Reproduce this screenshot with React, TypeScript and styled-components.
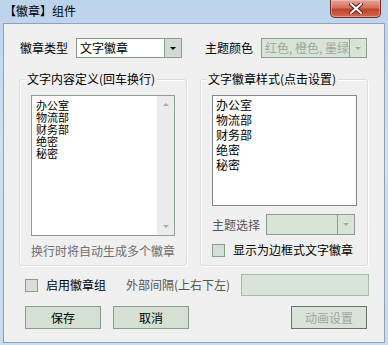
import React, { FC } from "react";
import styled, { createGlobalStyle } from "styled-components";

const GlobalStyle = createGlobalStyle`
	html, body {
		margin: 0;
		padding: 0;
		background: #c9dbef;
	}
	* {
		box-sizing: border-box;
	}
`;

const FONT = `"Noto Sans CJK SC", "Noto Sans", sans-serif`;

const textLines = ["办公室", "物流部", "财务部", "绝密", "秘密"];

const App: FC = () => {
	return (
		<>
			<GlobalStyle />
			<Window>
				<TitleBar>
					<Title>【徽章】组件</Title>
					<CloseButton>
						<svg width="14" height="11" viewBox="0 0 14 11">
							<path d="M2 1 L12 10 M12 1 L2 10" stroke="#5a2018" strokeWidth="4" strokeLinecap="square" />
							<path d="M2 1 L12 10 M12 1 L2 10" stroke="#ffffff" strokeWidth="2" strokeLinecap="square" />
						</svg>
					</CloseButton>
				</TitleBar>
				<Client>
					<TopRow>
						<FieldLabel $width={56}>徽章类型</FieldLabel>
						<Combo $width={106}>
							<ComboText>文字徽章</ComboText>
							<ComboArrow>
								<Triangle />
							</ComboArrow>
						</Combo>
						<Spacer $width={23} />
						<FieldLabel $width={56}>主题颜色</FieldLabel>
						<Combo $width={106} $disabled>
							<ComboText $disabled>红色, 橙色, 墨绿</ComboText>
							<ComboArrow $disabled>
								<Triangle $disabled />
							</ComboArrow>
						</Combo>
					</TopRow>

					<Groups>
						<Group>
							<Legend>文字内容定义(回车换行)</Legend>
							<TextArea>
								<TextLines>
									{textLines.map((t) => (
										<Line key={t} $tight>
											{t}
										</Line>
									))}
								</TextLines>
								<ScrollBar>
									<Triangle $disabled $up />
									<Triangle $disabled />
								</ScrollBar>
							</TextArea>
							<Hint>换行时将自动生成多个徽章</Hint>
						</Group>
						<Group>
							<Legend>文字徽章样式(点击设置)</Legend>
							<ListBox>
								{textLines.map((t) => (
									<Line key={t}>{t}</Line>
								))}
							</ListBox>
							<ThemeRow>
								<FieldLabel $width={54} $muted>
									主题选择
								</FieldLabel>
								<Combo $width={89} $height={21} $disabled>
									<ComboText $disabled />
									<ComboArrow $disabled>
										<Triangle $disabled />
									</ComboArrow>
								</Combo>
							</ThemeRow>
							<CheckRow>
								<CheckBox />
								<CheckLabel>显示为边框式文字徽章</CheckLabel>
							</CheckRow>
						</Group>
					</Groups>

					<OptionRow>
						<CheckBox />
						<CheckLabel>启用徽章组</CheckLabel>
						<Spacer $width={20} />
						<FieldLabel $width={115} $muted>
							外部间隔(上右下左)
						</FieldLabel>
						<SpacingInput />
					</OptionRow>

					<ButtonRow>
						<Button>保存</Button>
						<Button>取消</Button>
						<Spacer $grow />
						<Button $disabled>动画设置</Button>
					</ButtonRow>
				</Client>
			</Window>
		</>
	);
};

export default App;

const Window = styled.div`
	width: 388px;
	height: 345px;
	background: linear-gradient(#bcd3ec, #cfe0f2 40%, #c9dbef);
	display: flex;
	flex-direction: column;
	font-family: ${FONT};
	font-size: 12px;
	color: #000;
`;

const TitleBar = styled.div`
	height: 23px;
	display: flex;
	align-items: flex-start;
	justify-content: space-between;
	padding: 0 7px 0 4px;
`;

const Title = styled.div`
	line-height: 14px;
	margin-top: 4px;
	font-size: 12px;
`;

const CloseButton = styled.div`
	width: 51px;
	height: 18px;
	border: 1px solid #6b2a22;
	border-top: none;
	border-radius: 0 0 5px 5px;
	background: linear-gradient(#e4a597, #d2715f 45%, #c0432b 55%, #d36a4f);
	display: flex;
	align-items: center;
	justify-content: center;
	box-shadow: inset 0 0 0 1px rgba(255, 210, 200, 0.45);
`;

const Client = styled.div`
	flex: 1;
	margin: 0 3px 2px 3px;
	border: 1px solid #8fa2b8;
	background: #f0f0f0;
	display: flex;
	flex-direction: column;
	padding: 0 0 0 15px;
`;

const TopRow = styled.div`
	display: flex;
	align-items: center;
	margin-top: 14px;
	padding-left: 1px;
	height: 20px;
`;

const FieldLabel = styled.div<{ $width: number; $muted?: boolean }>`
	width: ${(p) => p.$width}px;
	flex-shrink: 0;
	white-space: nowrap;
	line-height: 14px;
	color: ${(p) => (p.$muted ? "#555" : "#000")};
`;

const Spacer = styled.div<{ $width?: number; $grow?: boolean }>`
	width: ${(p) => p.$width ?? 0}px;
	flex: ${(p) => (p.$grow ? 1 : "none")};
`;

const Combo = styled.div<{ $width: number; $height?: number; $disabled?: boolean }>`
	width: ${(p) => p.$width}px;
	height: ${(p) => p.$height ?? 20}px;
	border: 1px solid #8a9c8a;
	display: flex;
	background: ${(p) => (p.$disabled ? "#d8e4d8" : "#fff")};
`;

const ComboText = styled.div<{ $disabled?: boolean }>`
	flex: 1;
	padding-left: 3px;
	line-height: 18px;
	white-space: nowrap;
	overflow: hidden;
	color: ${(p) => (p.$disabled ? "#a3a3a3" : "#000")};
`;

const ComboArrow = styled.div<{ $disabled?: boolean }>`
	width: 17px;
	border-left: 1px solid #8a9c8a;
	background: ${(p) => (p.$disabled ? "#d8e4d8" : "#cfdccf")};
	display: flex;
	align-items: center;
	justify-content: center;
`;

const Triangle = styled.div<{ $disabled?: boolean; $up?: boolean }>`
	width: 0;
	height: 0;
	border-left: 3px solid transparent;
	border-right: 3px solid transparent;
	${(p) =>
		p.$up
			? `border-bottom: 3px solid ${p.$disabled ? "#a8a8a8" : "#000"};`
			: `border-top: 3px solid ${p.$disabled ? "#a8a8a8" : "#000"};`}
`;

const Groups = styled.div`
	display: flex;
	gap: 13px;
	margin-top: 21px;
`;

const Group = styled.div`
	position: relative;
	width: 168px;
	height: 187px;
	border: 1px solid #d5dfe5;
	border-radius: 3px;
	box-shadow: inset 1px 1px 0 #fff, 1px 1px 0 #fff;
	padding: 15px 11px 0 11px;
	display: flex;
	flex-direction: column;
`;

const Legend = styled.div`
	position: absolute;
	top: -8px;
	left: 5px;
	padding: 0 2px;
	background: #f0f0f0;
	line-height: 14px;
	white-space: nowrap;
`;

const TextArea = styled.div`
	width: 144px;
	height: 141px;
	border: 1px solid #8f9f8f;
	background: #fff;
	display: flex;
`;

const TextLines = styled.div`
	flex: 1;
	padding: 3px 0 0 4px;
`;

const Line = styled.div<{ $tight?: boolean }>`
	font-size: ${(p) => (p.$tight ? 11 : 12)}px;
	line-height: ${(p) => (p.$tight ? 12 : 15)}px;
	white-space: nowrap;
`;

const ScrollBar = styled.div`
	width: 17px;
	background: #ececec;
	display: flex;
	flex-direction: column;
	justify-content: space-between;
	align-items: center;
	padding: 7px 0 7px;
`;

const Hint = styled.div`
	margin-top: 8px;
	text-align: center;
	line-height: 14px;
	color: #6d6d6d;
`;

const ListBox = styled.div`
	width: 145px;
	height: 111px;
	border: 1px solid #828790;
	background: #fff;
	padding: 1px 0 0 3px;
`;

const ThemeRow = styled.div`
	display: flex;
	align-items: center;
	margin-top: 8px;
`;

const CheckRow = styled.div`
	display: flex;
	align-items: center;
	margin-top: 8px;
`;

const CheckBox = styled.div`
	width: 13px;
	height: 13px;
	border: 1px solid #8a9c8a;
	background: #d3e0d3;
	flex-shrink: 0;
`;

const CheckLabel = styled.div`
	margin-left: 8px;
	line-height: 14px;
	white-space: nowrap;
`;

const OptionRow = styled.div`
	display: flex;
	align-items: center;
	margin-top: 8px;
	padding-left: 6px;
	height: 22px;
`;

const SpacingInput = styled.div`
	width: 128px;
	height: 22px;
	border: 1px solid #abb9ab;
	background: #d8e4d8;
`;

const ButtonRow = styled.div`
	display: flex;
	gap: 12px;
	margin-top: 10px;
	padding: 0 17px 0 6px;
`;

const Button = styled.div<{ $disabled?: boolean }>`
	width: 76px;
	height: 23px;
	border: 1px solid ${(p) => (p.$disabled ? "#6e6e6e" : "#8a9c8a")};
	background: ${(p) => (p.$disabled ? "#d8e4d8" : "#d3e0d3")};
	color: ${(p) => (p.$disabled ? "#a3a3a3" : "#000")};
	display: flex;
	align-items: center;
	justify-content: center;
	line-height: 14px;
`;
